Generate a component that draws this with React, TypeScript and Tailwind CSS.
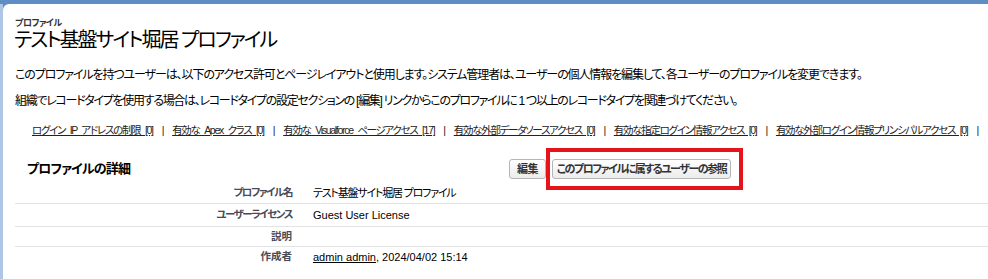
import React from 'react';

const links = [
  'ログイン IP アドレスの制限 [0]',
  '有効な Apex クラス [0]',
  '有効な Visualforce ページアクセス [17]',
  '有効な外部データソースアクセス [0]',
  '有効な指定ログイン情報アクセス [0]',
  '有効な外部ログイン情報プリンシパルアクセス [0]',
];

const rows: { label: string; value: React.ReactNode; h: string; lt: string }[] = [
  { label: 'プロファイル名', value: 'テスト基盤サイト堀居 プロファイル', h: 'h-[21px] border-b', lt: 'tracking-[-1.4px]' },
  {
    label: 'ユーザーライセンス',
    value: <span className="tracking-normal">Guest User License</span>,
    h: 'h-[23px] border-b',
    lt: 'tracking-[-1.5px]',
  },
  { label: '説明', value: '', h: 'h-[20px] border-b', lt: 'tracking-normal' },
  {
    label: '作成者',
    value: (
      <span className="tracking-normal">
        <a className="underline">admin admin</a>, 2024/04/02 15:14
      </span>
    ),
    h: 'h-[20px]',
    lt: 'tracking-normal',
  },
];

const btn =
  'h-[20px] whitespace-nowrap rounded-[3px] border border-[#b5b5b5] bg-gradient-to-b from-white to-[#ececec] text-[11px] font-bold text-[#333]';

export default function App() {
  return (
    <div className="w-[988px] h-[279px] overflow-hidden bg-[#5f8dc4] pt-[4px] font-['Liberation_Sans','Noto_Sans_CJK_JP',sans-serif] [font-feature-settings:'palt'] text-black">
      <div className="flex h-full">
        <div className="w-[3px] bg-[#aec5e6] shrink-0" />
        <div className="flex-1 bg-white rounded-tl-[6px] pl-3">
          {/* page title */}
          <div className="pt-[15px] text-[9px] font-bold leading-[9px] text-[#333] tracking-[-0.5px]">プロファイル</div>
          <h1 className="text-[20px] leading-[24px] -ml-px tracking-[-2px]">テスト基盤サイト堀居 プロファイル</h1>

          <p className="mt-[10px] text-[12px] leading-[26px] tracking-[-1.1px] whitespace-nowrap">
            このプロファイルを持つユーザーは、以下のアクセス許可とページレイアウトと使用します。システム管理者は、ユーザーの個人情報を編集して、各ユーザーのプロファイルを変更できます。
          </p>
          <p className="text-[12px] leading-[26px] tracking-[-1.3px] whitespace-nowrap">
            組織でレコードタイプを使用する場合は、レコードタイプの設定セクションの [編集] リンクからこのプロファイルに 1 つ以上のレコードタイプを関連づけてください。
          </p>

          {/* related list links */}
          <div className="mt-[3px] pl-[17px] flex items-center text-[10.5px] leading-[26px] text-[#222] whitespace-nowrap tracking-[-1.3px] [word-spacing:3px]">
            {links.map((l) => (
              <React.Fragment key={l}>
                <a className="underline shrink-0">{l}</a>
                <span className="px-[9px] shrink-0">|</span>
              </React.Fragment>
            ))}
          </div>

          {/* detail block */}
          <div className="mt-[12px] relative">
            <div className="flex items-center h-[28px]">
              <h2 className="w-[494px] pl-[12px] text-[13px] font-bold tracking-[-0.8px]">プロファイルの詳細</h2>
              <div className="flex gap-[6px]">
                <button className={`${btn} w-[37px] tracking-[-0.5px]`}>編集</button>
                <button className={`${btn} w-[179px] tracking-[-1.5px]`}>このプロファイルに属するユーザーの参照</button>
              </div>
            </div>
            {/* annotation */}
            <div className="absolute left-[531px] -top-[7px] w-[197px] h-[42px] border-4 border-[#e5141b]" />

            <div className="text-[11px]">
              {rows.map((r) => (
                <div key={r.label} className={`flex items-center border-[#e3e3e3] ${r.h}`}>
                  <div className={`w-[277px] text-right text-[10.5px] font-bold text-[#4a4a56] ${r.lt}`}>{r.label}</div>
                  <div className="pl-[21px] tracking-[-1.2px]">{r.value}</div>
                </div>
              ))}
            </div>
          </div>
        </div>
      </div>
    </div>
  );
}
